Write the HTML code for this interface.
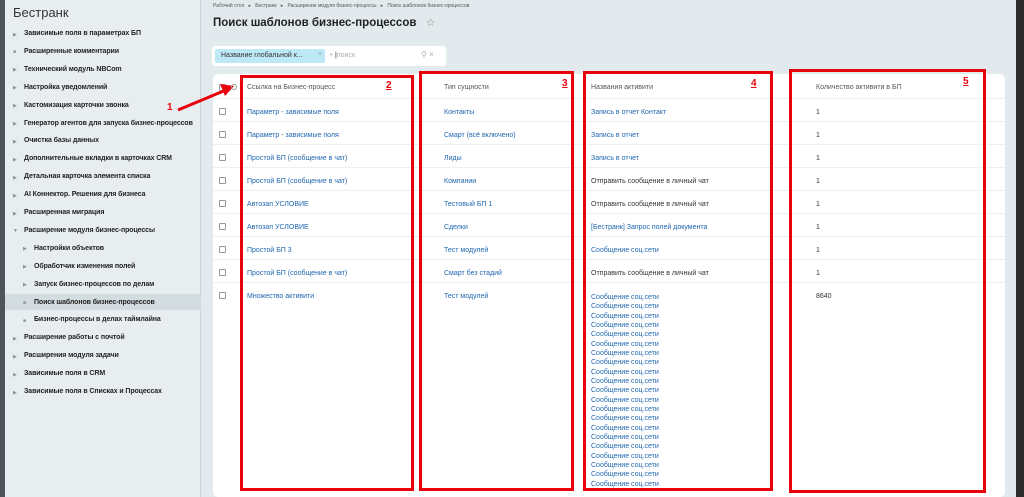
<!DOCTYPE html>
<html><head><meta charset="utf-8"><style>
*{margin:0;padding:0;box-sizing:border-box}
body{width:1024px;height:497px;overflow:hidden;background:#e3eaed;font-family:"Liberation Sans",sans-serif;position:relative}
.a{position:absolute;white-space:nowrap}
#ls{left:0;top:0;width:5px;height:497px;background:#4e5459}
#sb{left:5px;top:0;width:196px;height:497px;background:#e8eef0;border-right:1px solid #c9d2d6}
.si{position:absolute;font-size:7px;color:#222;font-weight:bold;letter-spacing:-0.1px}
.tri{position:absolute;font-size:5px;color:#8a9399}
#rs{left:1016px;top:0;width:8px;height:497px;background:#2b2b2b}
#tbl{left:213px;top:74px;width:792px;height:423px;background:#fff;border-radius:5px}
.hl{position:absolute;left:213px;width:792px;height:1px;background:#edf0f1}
.c{position:absolute;font-size:7px;color:#2067b0}
.h{position:absolute;font-size:7px;color:#555}
.cb{position:absolute;left:219px;width:7px;height:7px;border:1px solid #999;border-radius:1px;background:#fff}
.rb{position:absolute;border:3px solid #e8000c}
.num{position:absolute;color:#e8000c;font-weight:bold;font-size:10px;text-decoration:underline}
</style></head><body>
<div id="ls" class="a"></div>
<div id="sb" class="a">
<div class="a" style="left:8px;top:5px;font-size:13px;color:#333">Бестранк</div>
</div>
<div class="a" style="left:5px;top:294px;width:196px;height:16px;background:#d3dce0"></div>
<div id="items"></div>
<div id="rs" class="a"></div>
<div class="a" style="left:213px;top:3px;font-size:5px;color:#555">Рабочий стол &nbsp;&nbsp;▸&nbsp;&nbsp; Бестранк &nbsp;&nbsp;▸&nbsp;&nbsp; Расширение модуля бизнес-процессы &nbsp;&nbsp;▸&nbsp;&nbsp; Поиск шаблонов бизнес-процессов</div>
<div class="a" style="left:213px;top:16px;font-size:11.5px;font-weight:bold;color:#222">Поиск шаблонов бизнес-процессов <span style="font-weight:normal;color:#888;font-size:11px;margin-left:6px">☆</span></div>
<div class="a" style="left:212px;top:46px;width:234px;height:20px;background:#fff;border-radius:3px"></div>
<div class="a" style="left:215px;top:49px;width:110px;height:14px;background:#bde8f5;border-radius:2px"></div>
<div class="a" style="left:221px;top:52px;font-size:7px;color:#333">Название глобальной к...</div>
<div class="a" style="left:318px;top:51px;font-size:7px;color:#9ab">×</div>
<div class="a" style="left:329px;top:52px;font-size:7px;color:#aaa">+ <span style="color:#222">|</span>поиск</div>
<div class="a" style="left:421px;top:50px;font-size:8px;color:#aaa">⚲ ×</div>
<div id="tbl" class="a"></div>
<div id="rows"></div>
<svg class="a" style="left:0;top:0" width="1024" height="497"><line x1="178" y1="110" x2="226" y2="90" stroke="#e8000c" stroke-width="3"/><polygon points="234,86 220,84 225,96" fill="#e8000c"/><circle cx="234" cy="87" r="2.5" fill="none" stroke="#999" stroke-width="1"/></svg>
<div class="a" style="left:167px;top:102px;color:#e8000c;font-weight:bold;font-size:10px">1</div>
<div class="rb" style="left:240px;top:75px;width:174px;height:416px"></div>
<div class="rb" style="left:419px;top:71px;width:155px;height:420px"></div>
<div class="rb" style="left:583px;top:71px;width:190px;height:420px"></div>
<div class="rb" style="left:789px;top:69px;width:197px;height:424px"></div>
<div class="num" style="left:386px;top:80px">2</div>
<div class="num" style="left:562px;top:78px">3</div>
<div class="num" style="left:751px;top:78px">4</div>
<div class="num" style="left:963px;top:76px">5</div>
<script>
var it=[["Зависимые поля в параметрах БП",0],["Расширенные комментарии",0,1],["Технический модуль NBCom",0],["Настройка уведомлений",0],["Кастомизация карточки звонка",0],["Генератор агентов для запуска бизнес-процессов",0],["Очистка базы данных",0],["Дополнительные вкладки в карточках CRM",0],["Детальная карточка элемента списка",0],["AI Коннектор. Решения для бизнеса",0],["Расширенная миграция",0],["Расширение модуля бизнес-процессы",0,2],["Настройки объектов",1],["Обработчик изменения полей",1],["Запуск бизнес-процессов по делам",1],["Поиск шаблонов бизнес-процессов",1,1],["Бизнес-процессы в делах таймлайна",1,1],["Расширение работы с почтой",0],["Расширения модуля задачи",0],["Зависимые поля в CRM",0],["Зависимые поля в Списках и Процессах",0]];
var h="";it.forEach(function(x,i){var y=30+i*17.9;var l=x[1]?34:24;var g=x[2]==1?"■":x[2]==2?"▼":"▶";h+='<div class="tri" style="left:'+(l-11)+'px;top:'+(y+1.5)+'px">'+g+'</div><div class="si" style="left:'+l+'px;top:'+y+'px">'+x[0]+'</div>';});
document.getElementById("items").innerHTML=h;
var r=[["Параметр - зависимые поля","Контакты","Запись в отчет Контакт","1"],["Параметр - зависимые поля","Смарт (всё включено)","Запись в отчет","1"],["Простой БП (сообщение в чат)","Лиды","Запись в отчет","1"],["Простой БП (сообщение в чат)","Компании","Отправить сообщение в личный чат","1"],["Автозап УСЛОВИЕ","Тестовый БП 1","Отправить сообщение в личный чат","1"],["Автозап УСЛОВИЕ","Сделки","[Бестранк] Запрос полей документа","1"],["Простой БП 3","Тест модулей","Сообщение соц.сети","1"],["Простой БП (сообщение в чат)","Смарт без стадий","Отправить сообщение в личный чат","1"],["Множество активити","Тест модулей","","8640"]];
var s='<div class="cb" style="top:84px"></div><div class="h" style="left:247px;top:84px">Ссылка на Бизнес-процесс</div><div class="h" style="left:444px;top:84px">Тип сущности</div><div class="h" style="left:591px;top:84px">Названия активити</div><div class="h" style="left:816px;top:84px">Количество активити в БП</div><div class="hl" style="top:98px"></div>';
r.forEach(function(x,i){var y=109+i*23;s+='<div class="cb" style="top:'+(y-1)+'px"></div><div class="c" style="left:247px;top:'+y+'px">'+x[0]+'</div><div class="c" style="left:444px;top:'+y+'px">'+x[1]+'</div><div class="c" style="left:591px;top:'+y+'px;color:'+(x[2].indexOf("Отправить")==0?"#333":"#2067b0")+'">'+x[2]+'</div><div class="h" style="left:816px;top:'+y+'px;color:#333">'+x[3]+'</div>';if(i<8)s+='<div class="hl" style="top:'+(y+12)+'px"></div>';});
for(var k=0;k<21;k++)s+='<div class="c" style="left:591px;top:'+(294+k*9.33)+'px">Сообщение соц.сети</div>';
document.getElementById("rows").innerHTML=s;
</script>
</body></html>
